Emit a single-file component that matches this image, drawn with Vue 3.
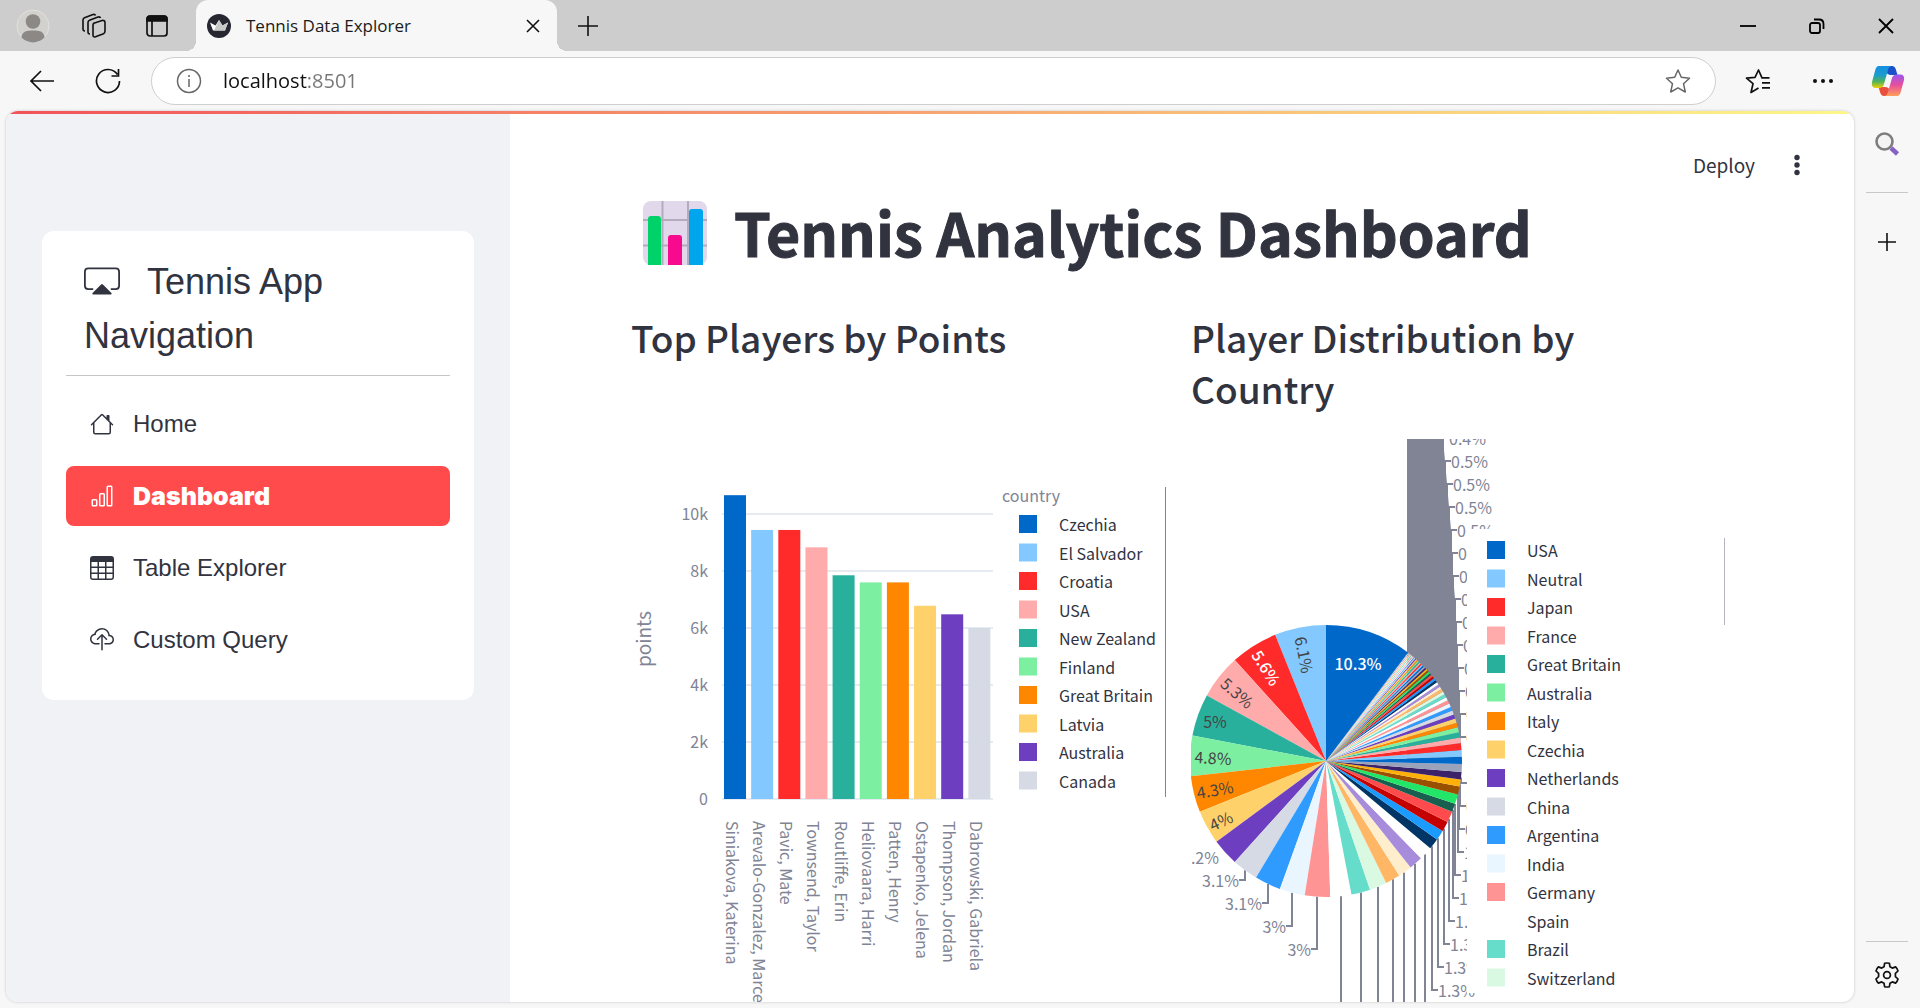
<script setup>
import { ref } from 'vue'

const address = ref('localhost:8501')

const links = [
  { name: 'Home', icon: 'house' },
  { name: 'Dashboard', icon: 'bars', active: true },
  { name: 'Table Explorer', icon: 'table' },
  { name: 'Custom Query', icon: 'cloud' },
]

const palette = [
  '#0068c9', '#83c9ff', '#ff2b2b', '#ffabab', '#29b09d', '#7defa1', '#ff8700', '#ffd16a', '#6d3fc0', '#d5dae5',
  '#309bff', '#e9f5ff', '#ff9494', '#ffffff', '#66dcca', '#d9f9e2', '#ffb766', '#ffeecc', '#a68cda', '#ffffff',
  '#003566', '#1c9bff', '#c40000', '#ff4b4b', '#195f50', '#21e667', '#995100', '#ffb10a', '#3c2268', '#9aa3bb',
]

/* Bar chart */
const BASE = 360
const STEP = 57
const players = [
  ['Siniakova, Katerina', 10660, 'Czechia'],
  ['Arevalo-Gonzalez, Marcelo', 9440, 'El Salvador'],
  ['Pavic, Mate', 9440, 'Croatia'],
  ['Townsend, Taylor', 8830, 'USA'],
  ['Routliffe, Erin', 7850, 'New Zealand'],
  ['Heliovaara, Harri', 7600, 'Finland'],
  ['Patten, Henry', 7600, 'Great Britain'],
  ['Ostapenko, Jelena', 6780, 'Latvia'],
  ['Thompson, Jordan', 6480, 'Australia'],
  ['Dabrowski, Gabriela', 6000, 'Canada'],
].map(([name, points, country], i) => {
  const height = (points / 2000) * STEP
  return { name, country, color: palette[i], x: 93 + i * 27.15, y: BASE - height, height }
})
const ticks = ['0', '2k', '4k', '6k', '8k', '10k'].map((label, i) => ({ label, y: BASE - i * STEP }))

/* Pie chart */
const CX = 135
const CY = 322
const R = 136
const shares = [
  6.1, 5.6, 5.3, 5, 4.8, 4.3, 4, 3.2, 3.1, 3.1, 3, 3, 2.5, 2.25, 2.05, 1.75, 1.65, 1.6, 1.6,
  1.3, 1.2, 1.2, 1.3, 1, 1.15, 0.95, 0.83, 0.87, 0.95, 0.85, 0.8, 0.8, 0.65, 0.65,
]
for (let i = 0, s = 0.58; i < 46; i++, s *= 0.955) shares.push(s)

const point = (share) => {
  const a = (share / 100) * 2 * Math.PI
  return [CX - R * Math.sin(a), CY - R * Math.cos(a)]
}
const wedge = (from, to) => {
  const [x1, y1] = point(from)
  const [x2, y2] = point(to)
  return `M${CX} ${CY}L${x1} ${y1}A${R} ${R} 0 0 0 ${x2} ${y2}Z`
}
let total = 0
const slices = shares.map((share, i) => {
  const from = total
  total += share
  return { d: wedge(from, Math.min(total, 89.7)), color: palette[(i + 1) % palette.length] }
})
slices.push({ d: wedge(89.7, 100), color: palette[0] })

const inside = [
  { t: '10.3%', x: 167, y: 225, r: 0, light: true },
  { t: '6.1%', x: 113, y: 216, r: 79 },
  { t: '5.6%', x: 75, y: 229, r: 58, light: true },
  { t: '5.3%', x: 46, y: 254, r: 41 },
  { t: '5%', x: 24, y: 283, r: 0 },
  { t: '4.8%', x: 22, y: 319, r: 3 },
  { t: '4.3%', x: 24, y: 351, r: -10 },
  { t: '4%', x: 30, y: 382, r: -25 },
]

const edge = (x) => Math.sqrt(Math.max(0, R * R - (x - CX) * (x - CX)))
const upper = [
  [252, '0.4%'], [254, '0.5%'], [256, '0.5%'], [258, '0.5%'], [260, '0.5%'], [261, '0.5%'], [262, '0.5%'],
  [264, '0.6%'], [265, '0.6%'], [266, '0.6%'], [267, '0.6%'], [268, '0.7%'], [269, '0.7%'], [269, '0.8%'],
].map(([x, t], i) => ({ x, t, y: -1 + i * 23, from: CY - edge(x) }))
const lower = [
  [270, '0.9%'], [269, '0.9%'], [268, '0.9%'], [267, '1%'], [264, '1.1%'], [262, '1.2%'],
  [258, '1.2%'], [253, '1.3%'], [247, '1.3%'], [241, '1.3%'],
].map(([x, t], i) => ({ x, t, y: 344 + i * 23, from: CY + edge(x) }))
const right = [...upper, ...lower]
const falling = [150, 170, 187, 202, 213, 224, 234].map((x) => ({ x, from: CY + edge(x) }))
const left = [
  { t: '3.2%', x: 34, y: 418 },
  { t: '3.1%', x: 54, y: 441 },
  { t: '3.1%', x: 77, y: 464 },
  { t: '3%', x: 101, y: 487 },
  { t: '3%', x: 126, y: 510 },
].map((l) => ({ ...l, from: CY + edge(l.x) }))
const mass = 'M216 0H252L254 22L256 45L258 68L260 91L262 137L264 160L266 206L268 252L269 275L270 322H216Z'

const countries = [
  'USA', 'Neutral', 'Japan', 'France', 'Great Britain', 'Australia', 'Italy', 'Czechia', 'Netherlands', 'China',
  'Argentina', 'India', 'Germany', 'Spain', 'Brazil', 'Switzerland',
]
</script>

<template>
  <div class="browser">
    <header class="tabs">
      <button class="tool" aria-label="Profile">
        <svg width="34" height="34" viewBox="0 0 34 34">
          <circle cx="17" cy="17" r="16" fill="#d2d1ce" stroke="#e2e1df" />
          <circle cx="17" cy="12.500" r="7.300" fill="#8c8886" />
          <path d="M5.500 28.500C6 22 11 21.500 17 21.500S28 22 28.500 28.500A16 16 0 0 1 5.500 28.500Z" fill="#8c8886" />
        </svg>
      </button>
      <button class="tool" aria-label="Workspaces">
        <svg width="28" height="28" viewBox="1 0 28 28" fill="none" stroke="#111" stroke-width="1.600">
          <path d="M13 11.500L22 8.500Q25 8 25 10.500V19Q25 21 23.500 21.700L15.500 24.800Q13 25.500 13 23V13Q13 11.800 14 11.200Z" />
          <path d="M10 22Q8 22 8 20V10.500Q8 9 9.500 8.300L18 5Q20 4.400 20.500 6" />
          <path d="M5 19Q3 19 3 17V8Q3 6.500 4.500 5.800L13 2.500Q15 2 15.500 3.500" />
        </svg>
      </button>
      <button class="tool" aria-label="Tab actions">
        <svg width="24" height="24" viewBox="0 0 24 24" fill="none" stroke="#111" stroke-width="1.700">
          <rect x="2" y="2" width="20" height="20" rx="3" />
          <path d="M2 7V5Q2 2 5 2H19Q22 2 22 5V7Z" fill="#111" />
          <path d="M7 7V22" />
        </svg>
      </button>
      <div class="tab">
        <svg width="24" height="24" viewBox="0 0 24 24">
          <circle cx="12" cy="12" r="12" fill="#262730" />
          <path d="M3 8.500L8.500 11.500L12 6L15.500 11.500L21 8.500L18 16.500H6Z" fill="#fff" />
          <path d="M12 6L15.500 11.500L21 8.500L18 16.500H7Z" fill="#c9c9c9" />
        </svg>
        <span class="tab-title">Tennis Data Explorer</span>
        <button class="close" aria-label="Close tab">
          <svg width="14" height="14" viewBox="0 0 14 14" stroke="#111" stroke-width="1.600"><path d="M1 1L13 13M13 1L1 13" /></svg>
        </button>
      </div>
      <button class="tool" aria-label="New tab">
        <svg width="22" height="22" viewBox="0 0 22 22" stroke="#111" stroke-width="1.600"><path d="M11 1V21M1 11H21" /></svg>
      </button>
      <div class="grow"></div>
      <button class="win" aria-label="Minimise">
        <svg width="16" height="16" viewBox="0 0 16 16" stroke="#000" stroke-width="1.800"><path d="M0 8H16" /></svg>
      </button>
      <button class="win" aria-label="Restore">
        <svg width="16" height="16" viewBox="0 0 16 16" fill="none" stroke="#000" stroke-width="1.800">
          <rect x="1" y="5" width="10" height="10" rx="2" /><path d="M5 1.500H10Q14.500 1.500 14.500 6V11" />
        </svg>
      </button>
      <button class="win" aria-label="Close">
        <svg width="16" height="16" viewBox="0 0 16 16" stroke="#000" stroke-width="1.800"><path d="M1 1L15 15M15 1L1 15" /></svg>
      </button>
    </header>

    <div class="toolbar">
      <button class="nav-btn" aria-label="Back">
        <svg width="26" height="24" viewBox="0 0 26 24" fill="none" stroke="#111" stroke-width="1.700"><path d="M25 12H2M12 2L2 12L12 22" /></svg>
      </button>
      <button class="nav-btn" aria-label="Reload">
        <svg width="26" height="26" viewBox="0 0 26 26" fill="none" stroke="#111" stroke-width="1.700">
          <path d="M22.500 6.500A11.500 11.500 0 1 0 24.500 13M23.500 1V8H16.500" />
        </svg>
      </button>
      <div class="address">
        <svg width="26" height="26" viewBox="0 0 26 26" fill="none" stroke="#666" stroke-width="1.500">
          <circle cx="13" cy="13" r="11.500" /><path d="M13 11V19M13 7V9" />
        </svg>
        <input v-model="address" class="url" type="text" aria-label="Address" />
        <button class="plain" aria-label="Add to favourites">
          <svg width="26" height="26" viewBox="0 0 26 26" fill="none" stroke="#666" stroke-width="1.500" stroke-linejoin="round">
            <path d="M13 2L16.300 9.300L24.500 10.200L18.500 15.700L20.300 24L13 19.800L5.700 24L7.500 15.700L1.500 10.200L9.700 9.300Z" />
          </svg>
        </button>
      </div>
      <button class="right-btn" aria-label="Favourites">
        <svg width="26" height="26" viewBox="0 0 26 26" fill="none" stroke="#111" stroke-width="1.700" stroke-linejoin="round">
          <path d="M24.500 9.800H17L13.500 2L10 9.300L1.500 10.200L8 15.700L6 24.500L13.500 20M17 14.800H25M17 19.800H25" />
        </svg>
      </button>
      <button class="right-btn" aria-label="More">
        <svg width="22" height="6" viewBox="0 0 22 6" fill="#111"><circle cx="3" cy="3" r="2" /><circle cx="11" cy="3" r="2" /><circle cx="19" cy="3" r="2" /></svg>
      </button>
      <button class="right-btn" aria-label="Copilot">
        <svg width="34" height="32" viewBox="0 0 34 32">
          <defs>
            <linearGradient id="cop-a" x1="0" y1="0" x2="0" y2="1">
              <stop offset="0" stop-color="#1490df" /><stop offset=".4" stop-color="#1b9bd0" /><stop offset=".7" stop-color="#4cb35c" /><stop offset="1" stop-color="#f0d000" />
            </linearGradient>
            <linearGradient id="cop-b" x1="0" y1="0" x2="0" y2="1">
              <stop offset="0" stop-color="#9a55f0" /><stop offset=".5" stop-color="#e8509a" /><stop offset="1" stop-color="#ffa05a" />
            </linearGradient>
          </defs>
          <path d="M17 1H21Q24 1 25 5L26.500 10H20Q16 10 15 6Z" fill="#1b50c8" />
          <path d="M17 31H13Q10 31 9 27L7.500 22H14Q18 22 19 26Z" fill="#e8503c" />
          <path d="M8 1H21Q18 1 17 5L13 19Q12 23 8 23H5Q0 23 1 17L4 6Q5 1 8 1Z" fill="url(#cop-a)" />
          <path d="M26 31H13Q16 31 17 27L21 13Q22 9.500 26 9.500H29Q34 9.500 33 15L30 26Q29 31 26 31Z" fill="url(#cop-b)" />
        </svg>
      </button>
    </div>

    <div class="body">
      <div class="page">
        <div class="ribbon"></div>
        <div class="app">
          <aside class="sidebar">
            <nav class="card" aria-label="Tennis App">
              <div class="menu-title">
                <svg class="menu-icon" width="36" height="36" viewBox="0 0 16 16" fill="#31333f">
                  <path d="M4.100 11.200H1.900Q.4 11.200.4 9.700V3.400Q.4 1.900 1.900 1.900H14.100Q15.600 1.900 15.600 3.400V9.700Q15.600 11.200 14.100 11.200H11.900" fill="none" stroke="#31333f" stroke-width=".800" />
                  <path d="M7.600 9.100Q8 8.700 8.400 9.100L12.200 12.900Q12.500 13.400 12 13.500H4Q3.500 13.400 3.800 12.900Z" />
                </svg>Tennis App Navigation
              </div>
              <hr class="rule" />
              <ul class="menu">
                <li v-for="l in links" :key="l.name">
                  <a href="#" class="link" :class="{ active: l.active }">
                    <svg width="24" height="24" viewBox="0 0 16 16" fill="currentColor">
                      <path v-if="l.icon === 'house'" d="M8.707 1.500a1 1 0 0 0-1.414 0L.646 8.146a.5.5 0 0 0 .708.708L2 8.207V13.500A1.500 1.500 0 0 0 3.500 15h9a1.500 1.500 0 0 0 1.500-1.500V8.207l.646.647a.5.5 0 0 0 .708-.708L13 5.793V2.500a.5.5 0 0 0-.5-.5h-1a.5.5 0 0 0-.5.5v1.293zM13 7.207V13.500a.5.5 0 0 1-.5.5h-9a.5.5 0 0 1-.5-.5V7.207l5-5z" />
                      <path v-if="l.icon === 'bars'" d="M11 2a1 1 0 0 1 1-1h2a1 1 0 0 1 1 1v12a1 1 0 0 1-1 1h-2a1 1 0 0 1-1-1zm1 0v12h2V2zM6 7a1 1 0 0 1 1-1h2a1 1 0 0 1 1 1v7a1 1 0 0 1-1 1H7a1 1 0 0 1-1-1zm1 0v7h2V7zM1 11a1 1 0 0 1 1-1h2a1 1 0 0 1 1 1v3a1 1 0 0 1-1 1H2a1 1 0 0 1-1-1zm1 0v3h2v-3z" fill-rule="evenodd" />
                      <path v-if="l.icon === 'table'" d="M0 2a2 2 0 0 1 2-2h12a2 2 0 0 1 2 2v12a2 2 0 0 1-2 2H2a2 2 0 0 1-2-2zm15 2h-4v3h4zm0 4h-4v3h4zm0 4h-4v3h3a1 1 0 0 0 1-1zm-5 3v-3H6v3zm-5 0v-3H1v2a1 1 0 0 0 1 1zm-4-4h4V8H1zm0-4h4V4H1zm5-3v3h4V4zm4 4H6v3h4z" />
                      <template v-if="l.icon === 'cloud'">
                        <path d="M4.406 1.342A5.530 5.530 0 0 1 8 0c2.690 0 4.923 2 5.166 4.579C14.758 4.804 16 6.137 16 7.773 16 9.569 14.502 11 12.687 11H10a.5.5 0 0 1 0-1h2.688C13.979 10 15 8.988 15 7.773c0-1.216-1.020-2.228-2.313-2.228h-.5v-.5C12.188 2.825 10.328 1 8 1a4.530 4.530 0 0 0-2.941 1.100c-.757.652-1.153 1.438-1.153 2.055v.448l-.445.049C2.064 4.805 1 5.952 1 7.318 1 8.785 2.230 10 3.781 10H6a.5.5 0 0 1 0 1H3.781C1.708 11 0 9.366 0 7.318c0-1.763 1.266-3.223 2.942-3.593.143-.863.698-1.723 1.464-2.383" />
                        <path d="M7.646 4.146a.5.5 0 0 1 .708 0l3 3a.5.5 0 0 1-.708.708L8.500 5.707V14.500a.5.5 0 0 1-1 0V5.707L5.354 7.854a.5.5 0 1 1-.708-.708z" />
                      </template>
                    </svg>
                    <span>{{ l.name }}</span>
                  </a>
                </li>
              </ul>
            </nav>
          </aside>

          <main class="main">
            <div class="actions">
              <button class="deploy">Deploy</button>
              <button class="plain" aria-label="Menu">
                <svg width="8" height="22" viewBox="0 0 8 22" fill="#31333f"><circle cx="4" cy="3.500" r="2.700" /><circle cx="4" cy="11" r="2.700" /><circle cx="4" cy="18.500" r="2.700" /></svg>
              </button>
            </div>
            <div class="content">
              <h1 class="title">
                <svg width="66" height="66" viewBox="0 0 66 66" aria-hidden="true">
                  <rect x="1" y="2" width="64" height="64" rx="8" fill="#e1d8ec" />
                  <path d="M20.500 2V66M46 2V66M1 21H65M1 46.500H65" stroke="#b4acbc" stroke-width="2" />
                  <path d="M6 66V20Q6 17 9 17H16Q19 17 19 20V66Z" fill="#00d26a" />
                  <path d="M26 66V39Q26 36 29 36H37Q40 36 40 39V66Z" fill="#f70a8d" />
                  <path d="M47 66V13Q47 10 50 10H58Q61 10 61 13V66Z" fill="#00a6ed" />
                </svg>
                <span>Tennis Analytics Dashboard</span>
              </h1>
              <div class="columns">
                <section class="column">
                  <h2 class="subtitle">Top Players by Points</h2>
                  <svg class="chart" role="img" aria-label="Top players by points">
                    <path v-for="t in ticks" :key="t.label" :d="`M91 ${t.y}H362`" stroke="#e6eaf1" stroke-width="2" />
                    <rect v-for="p in players" :key="p.name" :x="p.x" :y="p.y" width="22" :height="p.height" :fill="p.color" />
                    <text v-for="t in ticks" :key="'t' + t.label" class="axis" x="77" :y="t.y + 6" text-anchor="end">{{ t.label }}</text>
                    <text class="axis axis-title" transform="translate(20 200) rotate(-90)" text-anchor="middle">points</text>
                    <text v-for="p in players" :key="'n' + p.name" class="axis" :transform="`translate(${p.x + 2} 382) rotate(90)`">{{ p.name }}</text>
                    <text class="axis" x="371" y="63">country</text>
                    <g v-for="(p, i) in players" :key="'l' + p.name" :transform="`translate(388 ${76 + i * 28.5})`">
                      <rect width="18" height="18" :fill="p.color" />
                      <text class="entry" x="40" y="16">{{ p.country }}</text>
                    </g>
                    <rect x="534" y="48" width="1" height="310" fill="#808495" />
                  </svg>
                </section>
                <section class="column">
                  <h2 class="subtitle">Player Distribution by Country</h2>
                  <svg class="chart" role="img" aria-label="Player distribution by country">
                    <path :d="mass" fill="#808495" />
                    <g fill="none" stroke="#808495" stroke-width="2">
                      <path v-for="(l, i) in right" :key="i" :d="`M${l.x} ${l.from}V${l.y}H${l.x + 6}`" />
                      <path v-for="l in falling" :key="l.x" :d="`M${l.x} ${l.from}V600`" />
                      <path v-for="l in left.slice(1)" :key="l.x" :d="`M${l.x} ${l.from}V${l.y}H${l.x - 6}`" />
                    </g>
                    <path v-for="(s, i) in slices" :key="'s' + i" :d="s.d" :fill="s.color" />
                    <text
                      v-for="l in inside"
                      :key="l.t"
                      class="share"
                      :class="{ light: l.light }"
                      :transform="`translate(${l.x} ${l.y}) rotate(${l.r})`"
                      y="6"
                      text-anchor="middle"
                    >{{ l.t }}</text>
                    <text v-for="(l, i) in right" :key="'r' + i" class="axis" :x="l.x + 6" :y="l.y + 7">{{ l.t }}</text>
                    <text v-for="l in left" :key="'f' + l.x" class="axis" :x="l.x - 6" :y="l.y + 7" text-anchor="end">{{ l.t }}</text>
                    <rect x="276" y="90" width="260" height="464" fill="#fff" />
                    <g v-for="(c, i) in countries" :key="c" :transform="`translate(296 ${102 + i * 28.5})`">
                      <rect width="18" height="18" :fill="palette[i]" />
                      <text class="entry" x="40" y="16">{{ c }}</text>
                    </g>
                    <rect x="533" y="99" width="1" height="87" fill="#b3b5bf" />
                  </svg>
                </section>
              </div>
            </div>
          </main>
        </div>
      </div>

      <aside class="rail">
        <button class="plain" aria-label="Search">
          <svg width="26" height="26" viewBox="0 0 26 26" fill="none">
            <circle cx="10.500" cy="10.500" r="8" fill="#f3f3f3" stroke="#7d7d7d" stroke-width="2.600" />
            <path d="M17 17L23.500 23" stroke="#8661c5" stroke-width="4.500" />
          </svg>
        </button>
        <hr class="rail-rule" />
        <button class="plain add" aria-label="Customise">
          <svg width="18" height="18" viewBox="0 0 18 18" stroke="#111" stroke-width="1.600"><path d="M9 0V18M0 9H18" /></svg>
        </button>
        <div class="grow"></div>
        <hr class="rail-rule" />
        <button class="plain settings" aria-label="Settings">
          <svg width="26" height="26" viewBox="0 0 26 26" fill="none" stroke="#111" stroke-width="1.700" stroke-linejoin="round">
            <path d="M10.600 1.300Q13 .7 15.400 1.300L16 4.800L18.300 6.100L21.600 4.900Q23.400 6.600 24 9L21.400 11.400V14.600L24 17Q23.400 19.400 21.600 21.100L18.300 19.900L16 21.200L15.400 24.700Q13 25.300 10.600 24.700L10 21.200L7.700 19.900L4.400 21.100Q2.600 19.400 2 17L4.600 14.600V11.400L2 9Q2.600 6.600 4.400 4.900L7.700 6.100L10 4.800Z" />
            <circle cx="13" cy="13" r="3.400" />
          </svg>
        </button>
      </aside>
    </div>
  </div>
</template>

<style>
body {
  margin: 0;
  overflow: hidden;
}
</style>

<style scoped>
.browser {
  display: flex;
  flex-direction: column;
  height: 100vh;
  background: #f7f7f7;
  font-family: 'Noto Sans CJK SC', 'Noto Sans', sans-serif;
  color: #31333f;
}
button {
  display: flex;
  align-items: center;
  justify-content: center;
  padding: 0;
  border: 0;
  background: none;
  font-family: inherit;
  color: inherit;
}
svg {
  display: block;
  flex: none;
}
.grow {
  flex: 1;
}
.tabs {
  display: flex;
  height: 51px;
  padding-left: 2px;
  background: #cdcdcd;
}
.tool {
  width: 62px;
}
.win {
  width: 69px;
}
.tab {
  position: relative;
  display: flex;
  align-items: center;
  box-sizing: border-box;
  width: 361px;
  margin-left: 8px;
  padding: 0 17px 0 11px;
  border-radius: 12px 12px 0 0;
  background: #f7f7f7;
}
.tab::before,
.tab::after {
  content: '';
  position: absolute;
  bottom: 0;
  width: 10px;
  height: 10px;
}
.tab::before {
  right: 100%;
  background: radial-gradient(circle at 0 0, transparent 10px, #f7f7f7 10px);
}
.tab::after {
  left: 100%;
  background: radial-gradient(circle at 100% 0, transparent 10px, #f7f7f7 10px);
}
.tab-title {
  flex: 1;
  margin-left: 15px;
  font: 17px/24px 'Open Sans', 'Noto Sans', sans-serif;
  color: #1b1b1b;
}
.toolbar {
  display: flex;
  align-items: center;
  height: 60px;
  padding-left: 9px;
}
.nav-btn {
  width: 66px;
  height: 48px;
}
.right-btn {
  width: 65px;
  height: 48px;
}
.address {
  display: flex;
  flex: 1;
  align-items: center;
  box-sizing: border-box;
  height: 48px;
  margin: 0 9px 0 10px;
  padding: 0 24px;
  border: 1px solid #cfcfcf;
  border-radius: 24px;
  background: #fff;
}
.url {
  flex: 1;
  min-width: 0;
  margin-left: 21px;
  padding: 0;
  border: 0;
  outline: 0;
  font: 20px/28px 'Open Sans', 'Noto Sans', sans-serif;
  background: linear-gradient(90deg, #111 84px, #767676 84px);
  background-clip: text;
  color: transparent;
}
.body {
  display: flex;
  flex: 1;
  min-height: 0;
  padding: 0 0 6px 6px;
}
.page {
  display: flex;
  flex: 1;
  flex-direction: column;
  min-width: 0;
  overflow: hidden;
  border-radius: 12px;
  background: #fff;
  box-shadow: 0 0 3px #c4c4c4;
}
.ribbon {
  height: 3px;
  flex: none;
  background: linear-gradient(90deg, #f2525a, #fcf788);
}
.app {
  display: flex;
  flex: 1;
  min-height: 0;
}
.sidebar {
  box-sizing: border-box;
  width: 504px;
  flex: none;
  padding: 117px 36px 0;
  background: #f0f2f6;
}
.card {
  padding: 24px 24px 30px;
  border-radius: 12px;
  background: #fff;
  font-family: 'Liberation Sans', Arial, sans-serif;
}
.menu-title {
  padding: 0 18px;
  font-size: 36px;
  line-height: 54px;
}
.menu-icon {
  display: inline-block;
  margin-right: 27px;
  vertical-align: -6px;
}
.rule {
  height: 1px;
  margin: 12px 0 18px;
  border: 0;
  background: #c4c7c8;
}
.menu {
  display: flex;
  flex-direction: column;
  gap: 12px;
  margin: 0;
  padding: 0;
  list-style: none;
}
.link {
  display: flex;
  align-items: center;
  gap: 19px;
  padding: 12px 24px;
  border-radius: 8px;
  font-size: 24px;
  line-height: 36px;
  color: #31333f;
  text-decoration: none;
}
.link.active {
  background: #ff4b4b;
  color: #fff;
  font-family: 'Inter', sans-serif;
  font-size: 25px;
  font-weight: 900;
}
.main {
  flex: 1;
  min-width: 0;
  overflow: hidden;
}
.actions {
  display: flex;
  align-items: center;
  justify-content: flex-end;
  gap: 38px;
  box-sizing: border-box;
  height: 79px;
  padding: 22px 53px 0 0;
}
.deploy {
  font-size: 19px;
  line-height: 28px;
}
.content {
  padding: 0 127px 0 121px;
}
.title {
  display: flex;
  align-items: center;
  gap: 26px;
  margin: 0;
  padding-left: 11px;
  font-size: 59px;
  font-weight: 700;
  line-height: 78px;
  white-space: nowrap;
  -webkit-text-stroke: 1px currentColor;
}
.columns {
  display: flex;
  gap: 24px;
  padding-top: 41px;
}
.column {
  flex: 1;
  min-width: 0;
}
.subtitle {
  min-height: 102px;
  margin: 0 0 25px;
  padding-right: 24px;
  font-size: 37px;
  font-weight: 500;
  line-height: 51px;
}
.chart {
  width: 100%;
  height: 600px;
}
.axis {
  font-size: 16px;
  fill: #808495;
}
.axis-title {
  font-size: 19px;
}
.entry {
  font-size: 16px;
  fill: #31333f;
}
.share {
  font-size: 16px;
  fill: #444;
}
.share.light {
  font-weight: 500;
  fill: #fff;
}
.plain {
  flex: none;
}
.rail {
  display: flex;
  flex: none;
  flex-direction: column;
  align-items: center;
  box-sizing: border-box;
  width: 66px;
  padding: 20px 0 14px;
}
.rail-rule {
  width: 42px;
  height: 1px;
  margin: 35px 0 0;
  border: 0;
  background: #c8c8c8;
}
.add {
  margin-top: 40px;
}
.settings {
  margin-top: 20px;
}
</style>
